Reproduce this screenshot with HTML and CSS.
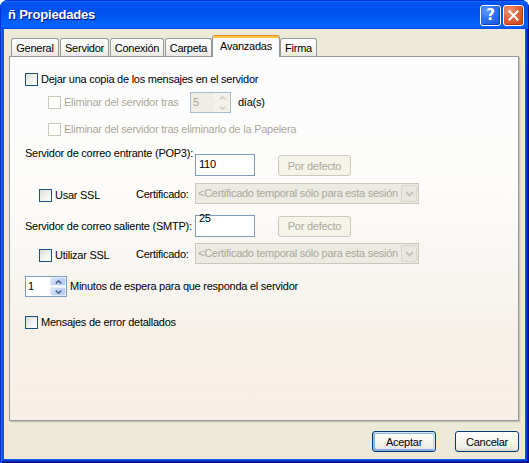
FILE: index.html
```html
<!DOCTYPE html>
<html lang="es">
<head>
<meta charset="utf-8">
<title>Propiedades</title>
<link rel="stylesheet" href="styles.css">
</head>
<body>
<div class="window">
  <div class="titlebar">
    <span class="title">ñ Propiedades</span>
    <div class="controls">
      <span class="tbtn help">?</span>
      <span class="tbtn close"><svg width="11" height="11" viewBox="0 0 11 11"><path d="M1.5 1.5 L9.5 9.5 M9.5 1.5 L1.5 9.5" stroke="#fff" stroke-width="2" stroke-linecap="square"/></svg></span>
    </div>
  </div>
  <div class="frame">
    <div class="client">
      <div class="tabs">
        <span class="tab t-general">General</span>
        <span class="tab t-servidor">Servidor</span>
        <span class="tab t-conexion">Conexión</span>
        <span class="tab t-carpeta">Carpeta</span>
        <span class="tab active t-avanzadas">Avanzadas</span>
        <span class="tab t-firma">Firma</span>
      </div>
      <div class="panel">
        <div class="row r-a">
          <span class="cb"></span><span class="lbl">Dejar una copia de los mensajes en el servidor</span>
        </div>
        <div class="row r-b">
          <span class="cb dis"></span><span class="lbl dim w-elim">Eliminar del servidor tras</span>
          <span class="spin dis w-days">
            <span class="val">5</span>
            <span class="sbtns">
              <span class="sbtn"><svg width="7" height="4" viewBox="0 0 7 4"><path d="M0.8 3.4 L3.5 0.8 L6.2 3.4" fill="none" stroke="#cfcdc4" stroke-width="1.5"/></svg></span>
              <span class="sbtn"><svg width="7" height="4" viewBox="0 0 7 4"><path d="M0.8 0.6 L3.5 3.2 L6.2 0.6" fill="none" stroke="#cfcdc4" stroke-width="1.5"/></svg></span>
            </span>
          </span>
          <span class="lbl days">día(s)</span>
        </div>
        <div class="row r-c">
          <span class="cb dis"></span><span class="lbl dim">Eliminar del servidor tras eliminarlo de la Papelera</span>
        </div>
        <div class="row r-d">
          <span class="lbl w-server">Servidor de correo entrante (POP3):</span>
          <span class="input in-pop"><span class="val">110</span></span>
          <span class="pbtn pb-pop">Por defecto</span>
        </div>
        <div class="row r-e">
          <span class="cbgroup"><span class="cb"></span><span class="lbl">Usar SSL</span></span>
          <span class="lbl w-cert">Certificado:</span>
          <span class="combo">
            <span class="ctext">&lt;Certificado temporal sólo para esta sesión</span>
            <span class="cbtn"><svg width="9" height="6" viewBox="0 0 9 6"><path d="M1 1 L4.5 4.5 L8 1" fill="none" stroke="#c6c4ba" stroke-width="2"/></svg></span>
          </span>
        </div>
        <div class="row r-f">
          <span class="lbl w-server">Servidor de correo saliente (SMTP):</span>
          <span class="input in-smtp"><span class="val">25</span></span>
          <span class="pbtn">Por defecto</span>
        </div>
        <div class="row r-g">
          <span class="cbgroup"><span class="cb"></span><span class="lbl">Utilizar SSL</span></span>
          <span class="lbl w-cert">Certificado:</span>
          <span class="combo">
            <span class="ctext">&lt;Certificado temporal sólo para esta sesión</span>
            <span class="cbtn"><svg width="9" height="6" viewBox="0 0 9 6"><path d="M1 1 L4.5 4.5 L8 1" fill="none" stroke="#c6c4ba" stroke-width="2"/></svg></span>
          </span>
        </div>
        <div class="row r-h">
          <span class="spin w-min">
            <span class="val">1</span>
            <span class="sbtns">
              <span class="sbtn"><svg width="7" height="4" viewBox="0 0 7 4"><path d="M0.8 3.4 L3.5 0.8 L6.2 3.4" fill="none" stroke="#4d6185" stroke-width="1.5"/></svg></span>
              <span class="sbtn"><svg width="7" height="4" viewBox="0 0 7 4"><path d="M0.8 0.6 L3.5 3.2 L6.2 0.6" fill="none" stroke="#4d6185" stroke-width="1.5"/></svg></span>
            </span>
          </span>
          <span class="lbl mins">Minutos de espera para que responda el servidor</span>
        </div>
        <div class="row r-i">
          <span class="cb"></span><span class="lbl">Mensajes de error detallados</span>
        </div>
      </div>
      <div class="footer">
        <span class="btn default">Aceptar</span>
        <span class="btn">Cancelar</span>
      </div>
    </div>
  </div>
</div>
</body>
</html>
```

FILE: styles.css
```css
* { box-sizing: border-box; }
html, body { margin: 0; padding: 0; background: #fff; }
body {
  font-family: "Liberation Sans", Arial, sans-serif;
  font-size: 11px;
  letter-spacing: -0.25px;
  color: #000;
}

.window {
  width: 529px;
  height: 463px;
  display: flex;
  flex-direction: column;
  border-radius: 8px 8px 0 0;
  overflow: hidden;
  background: #0054e3;
}

/* title bar */
.titlebar {
  height: 29px;
  flex: none;
  display: flex;
  justify-content: space-between;
  align-items: flex-start;
  padding: 0 5px 0 8px;
  background: linear-gradient(180deg, #0997ff, #0053ee 8%, #0050ee 40%, #0062f8 80%, #0066ff 90%, #005bff 95%, #0046e0 100%);
  box-shadow: inset 1px 1px #0831d9, inset -1px 0 #001ea0;
}
.title {
  margin-top: 7px;
  line-height: 15px;
  font-size: 13px;
  font-weight: bold;
  letter-spacing: -0.2px;
  color: #fff;
  text-shadow: 1px 1px #0f1089;
}
.controls {
  display: flex;
  gap: 2px;
  margin-top: 5px;
}
.tbtn {
  width: 21px;
  height: 21px;
  border: 1px solid #fff;
  border-radius: 3px;
  display: flex;
  align-items: center;
  justify-content: center;
  color: #fff;
}
.help {
  background: radial-gradient(circle at 30% 25%, #5d9bff 0%, #2c6ff2 45%, #1a55dc 100%);
  font-family: "DejaVu Sans", "Liberation Sans", sans-serif;
  font-weight: bold;
  font-size: 15px;
  letter-spacing: 0;
  line-height: 19px;
  box-shadow: inset -1px -1px #1640b8;
}
.close {
  background: radial-gradient(circle at 30% 25%, #f09878 0%, #e2603c 45%, #cc4418 100%);
  box-shadow: inset -1px -1px #b33812;
}

/* frame & client */
.frame {
  flex: 1;
  display: flex;
  padding: 0 4px 4px;
  background: #0a5ae8;
  box-shadow: inset 1px 0 #0831d9, inset 2px 0 #166aee, inset -1px -1px #00138c, inset -2px -2px #001ea0, inset 3px 0 #0855dd, inset -3px -3px #003bda;
}
.client {
  flex: 1;
  display: flex;
  flex-direction: column;
  background: #ece9d8;
}

/* tabs */
.tabs {
  height: 27px;
  flex: none;
  display: flex;
  align-items: flex-end;
  padding-left: 7px;
}
.tab {
  height: 18px;
  margin-right: 1px;
  display: flex;
  align-items: center;
  justify-content: center;
  padding-top: 1px;
  border: 1px solid #919b9c;
  border-bottom: none;
  border-radius: 3px 3px 0 0;
  background: linear-gradient(180deg, #fefefe, #f4f3ee 70%, #e8e7e0);
}
.tab.active {
  height: 22px;
  margin: 0 0 -1px -1px;
  padding-top: 0;
  padding-bottom: 2px;
  position: relative;
  z-index: 2;
  background: #fcfcfe;
  border-top: 1px solid #e68b2c;
  box-shadow: inset 0 2px #ffc73c;
}
.t-general { width: 48px; }
.t-servidor { width: 49px; }
.t-conexion { width: 54px; }
.t-carpeta { width: 47px; }
.t-avanzadas { width: 68px; }
.t-firma { width: 37px; }

/* panel */
.panel {
  height: 365px;
  width: 510px;
  flex: none;
  margin-left: 5px;
  padding: 16px 0 0 15px;
  border: 1px solid #919b9c;
  background: linear-gradient(180deg, #fdfdfe 0%, #fdfcfa 35%, #f8f7f3 55%, #f7f1ea 75%, #f8eee6 100%);
  box-shadow: 1px 1px #c8c5b5, 2px 2px #dedbca;
}

.row { display: flex; align-items: center; }
.r-a { height: 13px; }
.r-b { height: 21px; margin-top: 6px; padding-left: 23px; }
.r-c { height: 13px; margin-top: 10px; padding-left: 23px; }
.r-d { height: 29px; margin-top: 11px; align-items: flex-start; }
.r-e { height: 21px; margin-top: 7px; align-items: flex-start; padding-left: 14px; }
.r-f { height: 22px; margin-top: 11px; }
.r-g { height: 21px; margin-top: 6px; align-items: flex-start; padding-left: 14px; }
.r-h { height: 21px; margin-top: 12px; }
.r-i { height: 13px; margin-top: 19px; }

.lbl { line-height: 13px; white-space: nowrap; }
.dim { color: #aca899; }
.w-elim { width: 126px; }
.w-days { margin-right: 7px; }
.w-server { width: 170px; }
.w-cert { width: 59px; margin-top: 5px; }
.mins { margin-left: 3px; }

/* checkbox */
.cb {
  width: 13px;
  height: 13px;
  flex: none;
  margin-right: 3px;
  border: 1px solid #1c5180;
  background: linear-gradient(135deg, #dcdcd7 0%, #f4f4f0 60%, #fff 100%);
}
.cb.dis {
  border-color: #cac8bb;
  background: #fff;
}
.cbgroup {
  width: 97px;
  display: flex;
  align-items: center;
  margin-top: 6px;
}

/* inputs */
.input {
  width: 60px;
  height: 22px;
  border: 1px solid #7f9db9;
  background: #fff;
  padding-left: 3px;
  display: flex;
  align-items: center;
}
.in-pop { margin-top: 7px; }
.in-pop .val { margin-top: -3px; }
.in-smtp { align-items: flex-start; }
.in-smtp .val { margin-top: -4px; }

.spin {
  height: 21px;
  display: flex;
  border: 1px solid #7f9db9;
  background: #fff;
}
.spin.dis { width: 41px; border-color: #a9bbd0; background: #eeede6; color: #aca899; }
.w-min { width: 42px; }
.spin .val { flex: 1; padding-left: 2px; line-height: 18px; }
.sbtns {
  width: 16px;
  display: flex;
  flex-direction: column;
  gap: 1px;
}
.sbtn {
  flex: 1;
  display: flex;
  align-items: center;
  justify-content: center;
  border: 1px solid #e4ecfd;
  border-radius: 2px;
  background: linear-gradient(135deg, #dbe6fd 0%, #c3d3f8 50%, #b2c6f5 100%);
}
.spin.dis .sbtn {
  border-color: #f6f5f0;
  background: linear-gradient(135deg, #f7f6f1, #eceae2);
}

/* push buttons */
.pbtn {
  width: 73px;
  height: 21px;
  margin-left: 23px;
  display: flex;
  align-items: center;
  justify-content: center;
  border: 1px solid #cac8bb;
  border-radius: 3px;
  background: #f5f4ea;
  color: #aca899;
}
.pb-pop { margin-top: 8px; }

/* combo */
.combo {
  width: 224px;
  height: 21px;
  display: flex;
  align-items: center;
  padding: 0 1px 0 2px;
  border: 1px solid #cac8bb;
  background: #ebeae3;
  color: #aca899;
}
.ctext {
  flex: 1;
  white-space: nowrap;
  line-height: 17px;
  letter-spacing: -0.28px;
}
.cbtn {
  width: 16px;
  height: 17px;
  flex: none;
  display: flex;
  align-items: center;
  justify-content: center;
  border: 1px solid #d8d6cd;
  border-radius: 2px;
  background: #e8e7e0;
}

/* footer */
.footer {
  display: flex;
  justify-content: flex-end;
  gap: 19px;
  margin-top: 10px;
  padding-right: 6px;
}
.btn {
  width: 64px;
  height: 21px;
  display: flex;
  align-items: center;
  justify-content: center;
  border: 1px solid #003c74;
  border-radius: 3px;
  background: linear-gradient(180deg, #fff, #f3f2ec 60%, #ecebe6 86%, #d6d0c5);
}
.btn.default {
  box-shadow: inset -1px 1px #cee7ff, inset 1px 2px #98b8ea, inset -2px 2px #bcd4f6, inset 1px -1px #89ade4, inset 2px -2px #89ade4;
}
```
